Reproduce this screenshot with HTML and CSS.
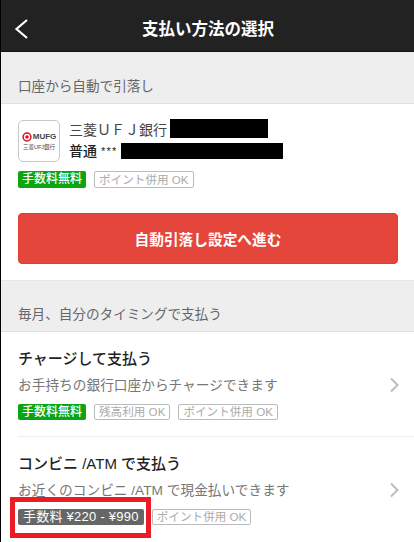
FILE: index.html
```html
<!DOCTYPE html>
<html lang="ja">
<head>
<meta charset="utf-8">
<title>支払い方法の選択</title>
<link rel="stylesheet" href="styles.css">
</head>
<body>
<div class="screen">
  <header class="topbar">
    <svg class="back" viewBox="0 0 16 22" width="16" height="22"><path d="M14 2 L3.5 11 L14 20" fill="none" stroke="#fff" stroke-width="2.2"/></svg>
    <h1 class="title">支払い方法の選択</h1>
  </header>

  <h2 class="band band-first">口座から自動で引落し</h2>
  <section class="card auto">
    <div class="bank">
      <div class="logo">
        <div class="logo-top">
          <svg viewBox="0 0 10 10" width="10" height="10"><circle cx="5" cy="5" r="3.9" fill="none" stroke="#d8101c" stroke-width="1.5"/><circle cx="5" cy="5" r="1.7" fill="#d8101c"/></svg>
          <span>MUFG</span>
        </div>
        <div class="logo-sub">三菱UFJ銀行</div>
      </div>
      <div class="bank-text">
        <div class="bank-name">三菱ＵＦＪ銀行<span class="mask mask-a"></span></div>
        <div class="bank-acct"><b>普通</b> <span class="stars">***</span><span class="mask mask-b"></span></div>
      </div>
    </div>
    <div class="tags">
      <span class="tag tag-green">手数料無料</span>
      <span class="tag tag-line">ポイント併用 OK</span>
    </div>
    <button class="cta">自動引落し設定へ進む</button>
  </section>

  <h2 class="band">毎月、自分のタイミングで支払う</h2>
  <section class="card">
    <div class="row row-first">
      <div class="row-main">
        <h3 class="row-title">チャージして支払う</h3>
        <p class="row-desc">お手持ちの銀行口座からチャージできます</p>
        <div class="tags">
          <span class="tag tag-green">手数料無料</span>
          <span class="tag tag-line">残高利用 OK</span>
          <span class="tag tag-line">ポイント併用 OK</span>
        </div>
      </div>
      <svg class="chev" viewBox="0 0 9 16" width="9" height="16"><path d="M1 1.5 L7.5 8 L1 14.5" fill="none" stroke="#bdbdbd" stroke-width="2"/></svg>
    </div>
    <div class="row">
      <div class="row-main">
        <h3 class="row-title">コンビニ /ATM で支払う</h3>
        <p class="row-desc">お近くのコンビニ /ATM で現金払いできます</p>
        <div class="tags">
          <span class="tag tag-gray">手数料 ¥220 - ¥990</span>
          <span class="tag tag-line">ポイント併用 OK</span>
        </div>
      </div>
      <svg class="chev" viewBox="0 0 9 16" width="9" height="16"><path d="M1 1.5 L7.5 8 L1 14.5" fill="none" stroke="#bdbdbd" stroke-width="2"/></svg>
    </div>
  </section>
  <div class="highlight"></div>
</div>
</body>
</html>
```
FILE: styles.css
```css
* { box-sizing: border-box; }
html, body { margin: 0; padding: 0; height: 100%; overflow: hidden; background: #fff; }
body { font-family: "Liberation Sans", "Noto Sans CJK JP", sans-serif; }
.screen { position: relative; width: 414px; height: 542px; overflow: hidden; border-left: 1px solid #000; }

.topbar { height: 52px; background: #222; border-bottom: 1px solid #111; display: flex; align-items: center; justify-content: center; position: relative; margin-left: -1px; }
.back { position: absolute; left: 13px; top: 18px; }
.title { margin: 0; font-size: 16.5px; font-weight: 700; color: #fff; line-height: 24px; position: relative; top: 3px; left: 1px; }

.band { margin: 0; height: 52px; padding: 24px 0 0 17px; background: #eee; border-top: 1px solid #e6e6e6; border-bottom: 1px solid #e0e0e0; font-size: 13.6px; font-weight: 400; line-height: 22px; color: #666; }
.band-first { border-top: 0; }
.band:not(.band-first) { padding-top: 23px; }

.card { background: #fff; }
.auto { padding: 16px 16px 16px 17px; height: 176px; }

.bank { display: flex; gap: 9px; }
.logo { width: 42px; height: 42px; border: 1px solid #c8c8c8; border-radius: 5px; display: flex; flex-direction: column; align-items: center; justify-content: center; gap: 2px; }
.logo-top { display: flex; align-items: center; gap: 1px; font-size: 8px; font-weight: 700; color: #444; line-height: 10px; }
.logo-sub { font-size: 5.5px; line-height: 7px; color: #444; white-space: nowrap; }
.bank-text { font-size: 14px; line-height: 20px; color: #444; }
.bank-name { display: flex; align-items: flex-start; height: 21px; }
.bank-acct { display: flex; align-items: flex-start; gap: 4px; height: 20px; color: #222; }
.bank-acct b { font-weight: 500; }
.stars { font-size: 11px; letter-spacing: 1.2px; }
.mask { display: block; background: #000; }
.mask-a { width: 98px; height: 19px; margin: -1px 0 0 3px; }
.mask-b { width: 162px; height: 16px; margin: 2px 0 0 0; }

.tags { display: flex; gap: 8px; margin-top: 9px; height: 17px; }
.tag { display: block; height: 17px; padding: 0 4px; font-size: 11.6px; line-height: 15px; border-radius: 2px; white-space: nowrap; }
.tag-green { background: #0aa50f; color: #fff; font-size: 12px; font-weight: 500; line-height: 17px; }
.tag-gray { background: #666; color: #fff; line-height: 16px; font-size: 13px; letter-spacing: .25px; padding: 0 5px; }
.tag-line { border: 1px solid #bbb; color: #aaa; }

.cta { display: block; width: 380px; height: 51px; margin: 25px 0 0; background: #e4463c; border: 1px solid #e23b32; border-radius: 4px; color: #fff; font-family: inherit; font-size: 14.7px; font-weight: 700; }

.row { display: flex; align-items: center; justify-content: space-between; margin-left: 17px; height: 105px; padding: 17px 15px 0 0; border-top: 1px solid #eee; }
.row-first { border-top: 0; height: 104px; }
.row-main { flex: none; align-self: flex-start; }
.row-title { margin: 0; font-size: 15px; font-weight: 500; line-height: 20px; color: #222; }
.row-desc { margin: 7px 0 0; font-size: 13.7px; line-height: 20px; color: #777; white-space: nowrap; }
.row .tags { margin-top: 8px; height: 16px; }
.row .tag { height: 16px; line-height: 14px; }
.row .tag-green, .row .tag-gray { line-height: 16px; }
.chev { position: relative; top: -8px; }

.highlight { position: absolute; left: 9px; top: 497px; width: 141px; height: 41px; border: 5px solid #ec1c24; }
```
